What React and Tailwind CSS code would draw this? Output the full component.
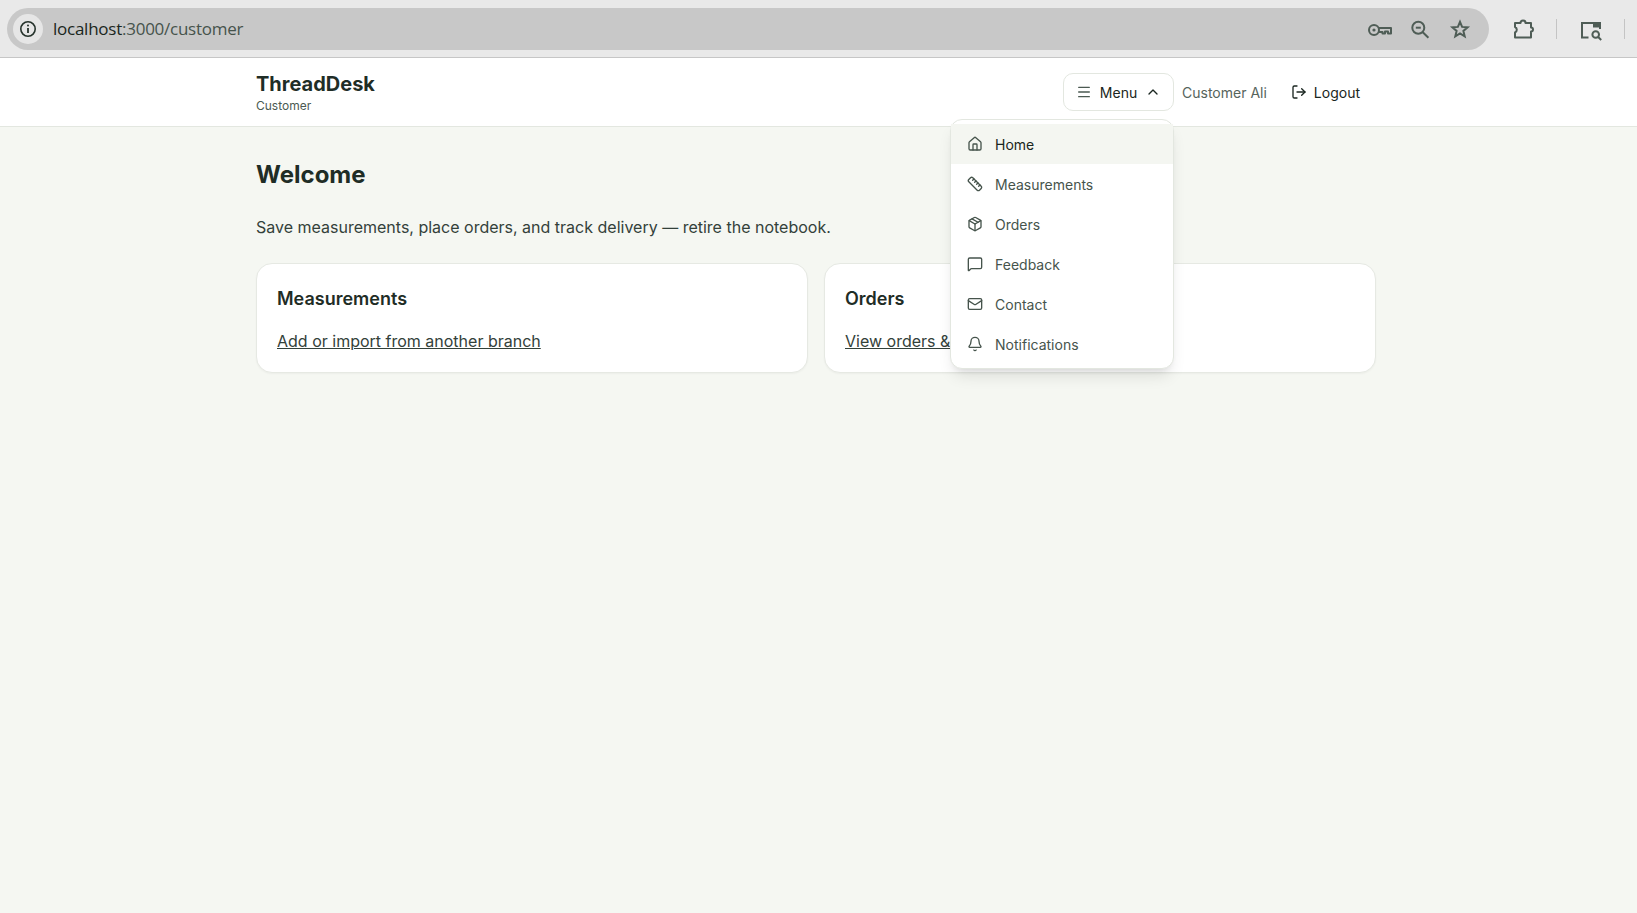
import React from "react";
import { House, Ruler, Package, MessageSquare, Mail, Bell, Menu, ChevronUp, LogOut } from "lucide-react";

const ink = "#4f5d56";

function KeyIcon() {
  return (
    <svg width="24" height="24" viewBox="0 0 24 24" fill="none" stroke={ink} strokeWidth="2" className="translate-y-px">
      <circle cx="6" cy="12" r="5" />
      <circle cx="6" cy="12" r="1.6" fill={ink} stroke="none" />
      <path d="M11 10h12v5.5h-3v-2h-3v2h-2.5V14H11" strokeLinejoin="round" />
    </svg>
  );
}

function ZoomIcon() {
  return (
    <svg width="24" height="24" viewBox="0 0 24 24" fill="none" stroke={ink} strokeWidth="2">
      <circle cx="10.3" cy="10.7" r="6" />
      <path d="M14.8 15.2l5.6 5.6" />
      <path d="M7.8 10.7h5" />
    </svg>
  );
}

function StarIcon() {
  return (
    <svg width="24" height="24" viewBox="0 0 24 24" fill="none" stroke={ink} strokeWidth="2" strokeLinejoin="miter">
      <path d="M12 4.8l2.1 5.1 5.5.4-4.2 3.6 1.3 5.4-4.7-2.9-4.7 2.9 1.3-5.4-4.2-3.6 5.5-.4z" />
    </svg>
  );
}

function ExtensionIcon() {
  return (
    <svg width="24" height="24" viewBox="0 0 24 24" fill="none" stroke={ink} strokeWidth="2" strokeLinejoin="round">
      <path d="M4 6h5.5a2.5 2.5 0 0 1 5 0H20v4.5a2 2 0 0 1 0 4V20.5H4v-5a3 3 0 0 0 0-5.5z" />
    </svg>
  );
}

function TabSearch() {
  return (
    <svg width="24" height="24" viewBox="0 0 24 24" fill="none" stroke={ink} strokeWidth="2">
      <path d="M9.5 20.5H3V6h18v6" />
      <path d="M14 5.5h8v5h-8z" fill={ink} stroke="none" />
      <circle cx="16.7" cy="17.5" r="3.3" />
      <path d="M19.2 20l3 3" />
    </svg>
  );
}

const items = [
  ["Home", House],
  ["Measurements", Ruler],
  ["Orders", Package],
  ["Feedback", MessageSquare],
  ["Contact", Mail],
  ["Notifications", Bell],
];

export default function App() {
  return (
    <div className="min-h-[913px] bg-[#f5f7f2] font-['Inter',sans-serif] text-[#1f2d26]">
      <div className="flex h-[58px] items-center border-b border-[#c6c6c6] bg-[#e9e9e9] pl-[7px]">
        <div className="flex h-[42px] w-[1482px] items-center rounded-full bg-[#c8c8c8] pl-[6px] pr-[17px]">
          <div className="flex h-[30px] w-[30px] items-center justify-center rounded-full bg-[#e6e6e6]">
            <svg width="18" height="18" viewBox="0 0 18 18" fill="none" stroke="#26332c" strokeWidth="1.6">
              <circle cx="9" cy="9" r="7.2" />
              <path d="M9 8v5" strokeWidth="1.8" />
              <circle cx="9" cy="5.4" r="1" fill="#26332c" stroke="none" />
            </svg>
          </div>
          <span className="ml-[10px] font-['Open_Sans',sans-serif] text-[17px] tracking-[-0.25px] text-[#46534c]">
            <span className="text-[#1a2620]">localhost</span>:3000/customer
          </span>
          <div className="ml-auto flex items-center gap-4">
            <KeyIcon />
            <ZoomIcon />
            <StarIcon />
          </div>
        </div>
        <div className="ml-[22px]"><ExtensionIcon /></div>
        <div className="ml-[21px] h-5 w-px bg-[#c4c4c4]" />
        <div className="ml-[22px]"><TabSearch /></div>
        <div className="ml-[21px] h-5 w-px bg-[#c4c4c4]" />
      </div>

      <header className="h-[69px] border-b border-[#e3e7e0] bg-white">
        <div className="ml-[256px] flex h-full w-[1120px] items-center justify-between">
          <div>
            <div className="text-[20px] font-bold leading-[26px] text-[#1f2d26]">ThreadDesk</div>
            <div className="mt-px text-[12px] leading-4 text-[#4b5a52]">Customer</div>
          </div>
          <div className="relative flex items-center">
            <button className="flex h-[38px] w-[111px] items-center justify-center gap-2 rounded-[10px] border border-[#e3e7e0] bg-white text-[14px] font-normal text-[#1a2620]">
              <Menu size={16} color="#4b5a52" />
              <span>Menu</span>
              <ChevronUp size={16} />
            </button>
            <span className="ml-[8px] text-[14px] text-[#56645c]">Customer Ali</span>
            <button className="ml-[8px] flex h-[38px] items-center gap-[7px] px-4 text-[14px] font-normal text-[#1a2620]">
              <LogOut size={16} />
              Logout
            </button>
            <div className="absolute left-[-113px] top-[46px] z-10 w-[224px] rounded-xl border border-[#e3e7e0] bg-white py-1 shadow-lg">
              {items.map(([label, Icon], i) => (
                <div key={label} className={`flex h-10 items-center gap-3 px-4 text-[14px] ${i === 0 ? "bg-[#f4f6f1] text-[#1a2620]" : "text-[#46544c]"}`}>
                  <Icon size={16} color="#46544c" />
                  {label}
                </div>
              ))}
            </div>
          </div>
        </div>
      </header>

      <main className="ml-[256px] w-[1120px] pt-8">
        <h1 className="text-[24px] font-bold leading-8 text-[#1f2d26]">Welcome</h1>
        <p className="mt-6 text-[16px] leading-6 text-[#33413a]">Save measurements, place orders, and track delivery — retire the notebook.</p>
        <div className="mt-6 grid grid-cols-2 gap-4">
          <div className="rounded-2xl border border-[#e6e9e3] bg-white px-5 pb-[19px] pt-[21px] shadow-[0_1px_2px_rgba(0,0,0,0.04)]">
            <h2 className="text-[18px] font-semibold leading-7 text-[#1f2d26]">Measurements</h2>
            <a className="mt-4 block text-[16px] leading-6 text-[#33413a] underline">Add or import from another branch</a>
          </div>
          <div className="rounded-2xl border border-[#e6e9e3] bg-white px-5 pb-[19px] pt-[21px] shadow-[0_1px_2px_rgba(0,0,0,0.04)]">
            <h2 className="text-[18px] font-semibold leading-7 text-[#1f2d26]">Orders</h2>
            <a className="mt-4 block text-[16px] leading-6 text-[#33413a] underline">View orders &amp;</a>
          </div>
        </div>
      </main>
    </div>
  );
}
